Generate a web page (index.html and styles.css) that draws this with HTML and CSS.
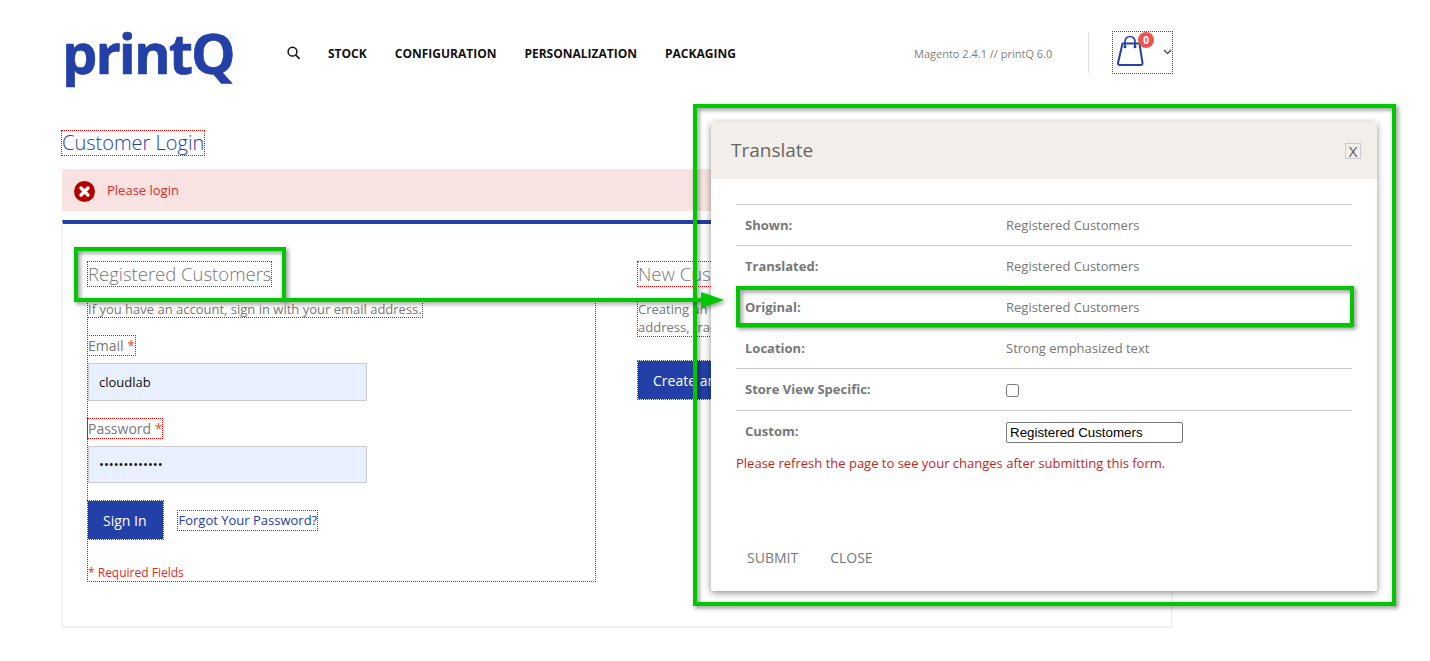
FILE: index.html
```html
<!DOCTYPE html>
<html lang="en">
<head>
<meta charset="utf-8">
<title>Customer Login</title>
<link rel="stylesheet" href="styles.css">
</head>
<body>
<header class="header">
  <div class="logo">printQ</div>
  <nav class="nav">
    <svg class="search" width="13" height="14" viewBox="0 0 13 14"><circle cx="5.500" cy="5.700" r="4.400" fill="none" stroke="#111" stroke-width="1.500"/><path d="M8.800 9l3.800 4" stroke="#111" stroke-width="1.700"/></svg>
    <a>Stock</a><a>Configuration</a><a>Personalization</a><a>Packaging</a>
  </nav>
  <div class="version">Magento 2.4.1 // printQ 6.0</div>
  <div class="divider"></div>
  <div class="cart mark">
    <svg width="30" height="34" viewBox="0 0 30 34"><path d="M7.500 9.500H24.500L27.500 29q.3 2-2 2H5q-2.300 0-2-2z" fill="none" stroke="#2340a8" stroke-width="2"/><path d="M10 12V7.500a5 5 0 0 1 10 0V12" fill="none" stroke="#2340a8" stroke-width="1.700"/><circle cx="10" cy="12.700" r="1.500" fill="#2340a8"/><circle cx="20" cy="12.700" r="1.500" fill="#2340a8"/></svg>
    <span class="badge">0</span>
    <svg class="chev" width="9" height="6" viewBox="0 0 9 6"><path d="M1 1l3.500 3.500L8 1" fill="none" stroke="#555" stroke-width="1.500"/></svg>
  </div>
</header>
<main class="main">
  <h1 class="page-title"><span class="mark">Customer Login</span></h1>
  <div class="message">
    <svg width="21" height="21" viewBox="0 0 21 21"><circle cx="10.500" cy="10.500" r="10.500" fill="#b30000"/><path d="M7 7l7 7M14 7l-7 7" stroke="#fff" stroke-width="3.400" stroke-linecap="round"/></svg>
    <span>Please login</span>
  </div>
  <section class="card">
    <div class="col">
      <h2 class="col-title mark">Registered Customers</h2>
      <div class="login-box">
        <p class="intro mark">If you have an account, sign in with your email address.</p>
        <label class="field-label mark">Email <em>*</em></label>
        <input class="field" type="text" value="cloudlab">
        <label class="field-label mark pass-label">Password <em>*</em></label>
        <input class="field" type="password" value="cloudlabcloud">
        <div class="actions">
          <button class="primary mark">Sign In</button>
          <a class="forgot mark">Forgot Your Password?</a>
        </div>
        <p class="required">* Required Fields</p>
      </div>
    </div>
    <div class="col col-new">
      <h2 class="col-title mark">New Customers</h2>
      <p class="intro two mark">Creating an account has many benefits: check out faster, keep more than one address, track orders and more.</p>
      <button class="primary create mark">Create an Account</button>
    </div>
  </section>
</main>

<div class="modal">
  <div class="modal-head">
    <span class="modal-title">Translate</span>
    <button class="modal-x">X</button>
  </div>
  <div class="modal-body">
    <div class="row"><b>Shown:</b><span>Registered Customers</span></div>
    <div class="row"><b>Translated:</b><span>Registered Customers</span></div>
    <div class="row"><b>Original:</b><span>Registered Customers</span></div>
    <div class="row"><b>Location:</b><span>Strong emphasized text</span></div>
    <div class="row tall"><b>Store View Specific:</b><input class="check" type="checkbox"></div>
    <div class="row tall"><b>Custom:</b><input class="custom" type="text" value="Registered Customers"></div>
    <p class="notice">Please refresh the page to see your changes after submitting this form.</p>
  </div>
  <div class="modal-foot"><a>SUBMIT</a><a>CLOSE</a></div>
</div>

<div class="callout callout-outer"></div>
<div class="callout callout-title"></div>
<div class="callout callout-orig"></div>
<div class="arrow-line"></div>
<div class="arrow-head"></div>
</body>
</html>
```
FILE: styles.css
```css
* { box-sizing: border-box; }
html, body { margin: 0; height: 661px; overflow: hidden; background: #fff; }
body { font-family: "Open Sans", sans-serif; font-size: 13px; color: #777; position: relative; }
.mark { outline: 1px dotted red; }

.header { display: flex; align-items: center; height: 106px; padding-left: 62px; }
.logo { width: 225px; font-family: "Open Sans", sans-serif; font-weight: 700; font-size: 56px; line-height: 60px; letter-spacing: -2px; color: #2340a8; margin-top: -3px; -webkit-text-stroke: .6px #2340a8; }
.nav { display: flex; align-items: center; gap: 28px; width: 627px; }
.nav a { font-size: 12px; font-weight: 700; text-transform: uppercase; color: #111; }
.version { width: 174px; font-size: 11px; color: #808080; }
.divider { width: 1px; height: 40px; background: #ddd; margin-right: 24px; }
.cart { width: 59px; height: 41px; position: relative; margin-bottom: 1px; padding: 2px 0 0 2px; }
.cart > svg:first-child { display: block; }
.badge { position: absolute; left: 25px; top: 0; width: 16px; height: 16px; border-radius: 50%; background: #e9564f; color: #fff; font-size: 10px; font-weight: 700; line-height: 16px; text-align: center; }
.chev { position: absolute; left: 50px; top: 17px; }

.main { padding: 25px 0 0 62px; width: 1172px; }
.page-title { margin: 0 0 14px; font-size: 20px; font-weight: 300; line-height: 24px; color: #2340a8; }
.page-title .mark { display: inline-block; }
.message { display: flex; align-items: center; gap: 12px; height: 42px; padding-left: 12px; background: #f9e2e2; color: #e02b27; font-size: 13px; }
.message svg { margin-top: 3px; }
.card { display: flex; gap: 43px; height: 407px; margin-top: 9px; padding: 38px 25px 0; border: 1px solid #eee; border-top: 4px solid #2340a8; box-shadow: 0 1px 2px rgba(0,0,0,.08); }
.col { width: 507px; flex: none; }
.col-title { display: inline-block; margin: 0; font-size: 18.5px; font-weight: 300; line-height: 24px; color: #777; }
.login-box { height: 280px; margin-top: 15px; outline: 1px dotted red; display: flex; flex-direction: column; align-items: flex-start; }
.intro { margin: 0; line-height: 16px; }
.intro.two { margin-top: 14px; width: 507px; line-height: 18px; }
.field-label { margin-top: 19px; font-size: 14px; line-height: 19px; }
.pass-label { margin-top: 18px; }
.field-label em { color: #e8502a; font-style: normal; }
.field { width: 279px; height: 38px; margin-top: 8px; padding: 0 10px; border: 1px solid #ccc; background: #e8f0fe; font-family: "Open Sans", sans-serif; font-size: 13px; color: #111; }
.field:focus { outline: none; }
.actions { display: flex; align-items: center; gap: 15px; margin-top: 18px; }
.primary { height: 38px; padding: 0 16px 0 15px; border: 0; background: #2340a8; color: #fff; font-family: "Open Sans", sans-serif; font-size: 14px; }
.forgot { color: #2340a8; font-size: 13px; line-height: 19px; padding-left: 1px; margin-top: 1px; }
.required { margin: 26px 0 0; font-size: 12px; line-height: 16px; color: #e02b27; }
.create { display: block; margin-top: 25px; }

.modal { position: absolute; left: 711px; top: 122px; width: 666px; height: 469px; background: #fff; box-shadow: 0 2px 7px rgba(0,0,0,.45); border-radius: 2px; }
.modal-head { display: flex; justify-content: space-between; align-items: center; height: 57px; padding: 0 16px 0 20px; background: #f2efea; }
.modal-title { font-size: 19px; color: #666; margin-top: -1px; }
.modal-x { width: 16px; height: 16px; padding: 0; border: 1px solid #ccc; background: #f2efea; font-family: "Open Sans", sans-serif; font-size: 15px; line-height: 14px; color: #555; }
.modal-body { padding: 25px 25px 0; }
.row { display: flex; align-items: center; height: 41px; padding-left: 9px; border-top: 1px solid #ccc; }
.row b { width: 261px; flex: none; font-weight: 700; }
.row.tall { height: 42px; }
.row.tall b { margin-top: -2px; }
.check { width: 13px; height: 13px; margin: 2px 0 0; }
.custom { width: 177px; height: 21px; margin: 2px 0 0; padding: 1px 3px; border: 1px solid #767676; border-radius: 2px; font-family: "Liberation Sans", sans-serif; font-size: 13.333px; color: #000; }
.notice { margin: 2px 0 0; line-height: 18px; color: #c3261c; }
.modal-foot { display: flex; gap: 32px; padding: 76px 0 0 36px; font-size: 14px; }

.callout { position: absolute; border: 4px solid #00c800; filter: drop-shadow(2px 2px 2px rgba(0,0,0,.45)); }
.callout-outer { left: 693px; top: 104px; width: 703px; height: 502px; }
.callout-title { left: 74px; top: 247px; width: 212px; height: 55px; }
.callout-orig { left: 736px; top: 286px; width: 618px; height: 41px; }
.arrow-line { position: absolute; left: 284px; top: 298px; width: 420px; height: 4px; background: #00c800; filter: drop-shadow(2px 2px 2px rgba(0,0,0,.4)); }
.arrow-head { position: absolute; left: 701px; top: 292px; width: 0; height: 0; border-style: solid; border-width: 8px 0 8px 23px; border-color: transparent transparent transparent #00c800; filter: drop-shadow(2px 2px 2px rgba(0,0,0,.4)); }
```
